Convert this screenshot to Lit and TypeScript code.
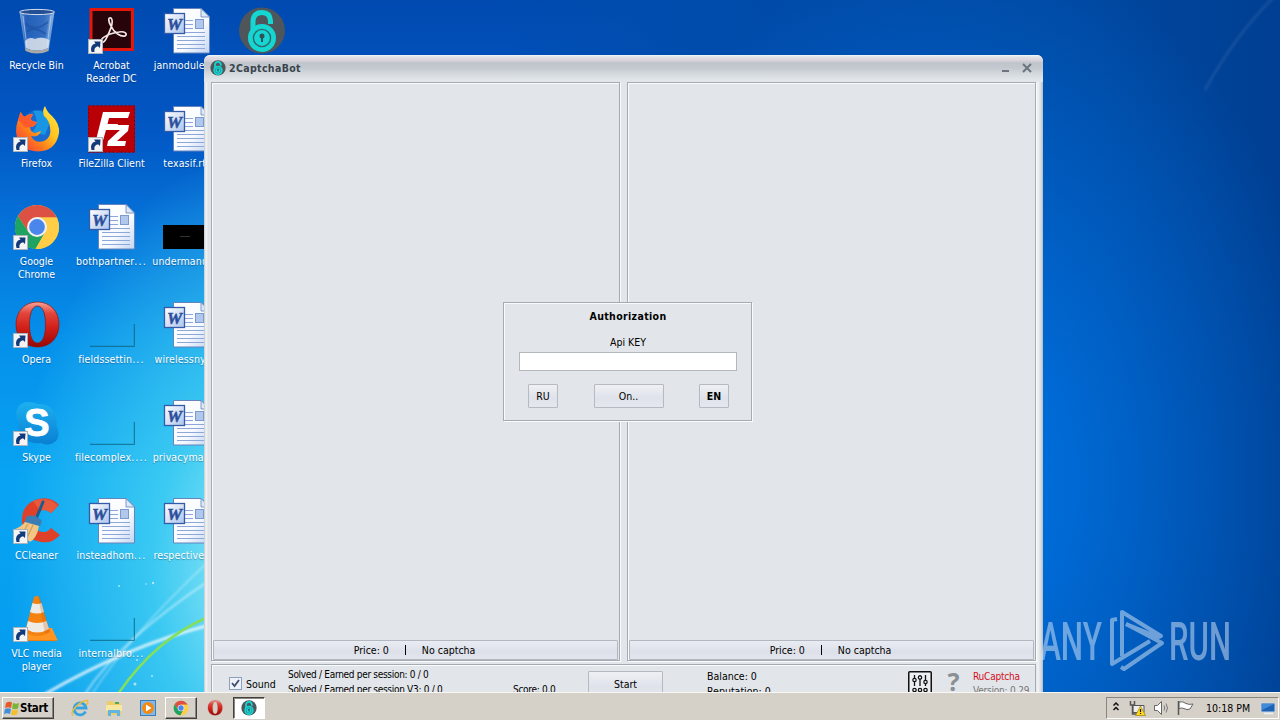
import { LitElement, html, svg, css, TemplateResult, SVGTemplateResult } from "lit";
import { customElement, property } from "lit/decorators.js";
import { classMap } from "lit/directives/class-map.js";

interface DesktopItem {
  icon: string;
  label: string;
  shortcut?: boolean;
}

const EMPTY: DesktopItem = { icon: "none", label: "" };

const COLUMNS: DesktopItem[][] = [
  [
    { icon: "bin", label: "Recycle Bin" },
    { icon: "firefox", label: "Firefox", shortcut: true },
    { icon: "chrome", label: "Google Chrome", shortcut: true },
    { icon: "opera", label: "Opera", shortcut: true },
    { icon: "skype", label: "Skype", shortcut: true },
    { icon: "ccleaner", label: "CCleaner", shortcut: true },
    { icon: "vlc", label: "VLC media player", shortcut: true },
  ],
  [
    { icon: "acrobat", label: "Acrobat Reader DC", shortcut: true },
    { icon: "filezilla", label: "FileZilla Client", shortcut: true },
    { icon: "word", label: "bothpartner..." },
    { icon: "blank", label: "fieldssettin..." },
    { icon: "blank", label: "filecomplex...." },
    { icon: "word", label: "insteadhom..." },
    { icon: "blank", label: "internalbro..." },
  ],
  [
    { icon: "word", label: "janmodule.rtf" },
    { icon: "word", label: "texasif.rtf" },
    { icon: "thumb", label: "undermanu..." },
    { icon: "word", label: "wirelessny..." },
    { icon: "word", label: "privacymar..." },
    { icon: "word", label: "respectivel..." },
    EMPTY,
  ],
  [{ icon: "lock", label: "" }, EMPTY, EMPTY, EMPTY, EMPTY, EMPTY, EMPTY],
];

const ICONS: Record<string, SVGTemplateResult> = {
  none: svg``,

  bin: svg`
    <defs>
      <linearGradient id="glass" x1="0" x2="1">
        <stop offset="0" stop-color="#8fb4e2" /><stop offset=".2" stop-color="#2f68bf" />
        <stop offset=".7" stop-color="#4a82d0" /><stop offset="1" stop-color="#a5c6ea" />
      </linearGradient>
    </defs>
    <path d="M7.500 5 L13 42 Q25 49 37 42 L42.500 5 Z" fill="url(#glass)" fill-opacity=".85" />
    <path d="M12 7 L16 30 H34 L38 7 Z" fill="#1d55b0" opacity=".35" />
    <path d="M13 34 Q17 29 23 32 Q30 29 37.500 33 L36.500 41 Q25 46 13.500 41 Z" fill="#dfe4ea" fill-opacity=".85" />
    <path d="M13 41 Q25 46 37 41 L36.500 44 Q25 49 13.500 44 Z" fill="#a9aaa6" />
    <ellipse cx="25" cy="5" rx="17.500" ry="2.600" fill="#244f94" stroke="#d2deea" stroke-width="1" />
    <path d="M13 16 Q22 26 36 15 M15 25 Q20 18 34 27" fill="none" stroke="#1c4fa0" stroke-width="2" opacity=".6" />
    <path d="M11 9 L15 40 M39 9 L35 40" stroke="#d6e6f6" stroke-width="1" opacity=".55" />`,

  firefox: svg`
    <defs>
      <linearGradient id="fox" x1="1" y1="0" x2="0" y2="1">
        <stop offset="0" stop-color="#fff04a" /><stop offset=".4" stop-color="#ffc21f" />
        <stop offset=".65" stop-color="#ff7a1c" /><stop offset="1" stop-color="#f0284a" />
      </linearGradient>
    </defs>
    <circle cx="26" cy="21" r="16" fill="#176bd2" />
    <path d="M21 6 Q33 3 38 17 L33 30 L20 27 Q29 19 21 6 Z" fill="#19b3ef" opacity=".6" />
    <path d="M33 1 Q35 7 40 11 Q48 19 47 28 Q44 46 26 46.500 Q6 46 4 27 Q4 20 6 15 L8.500 7 L12 12 Q16 9 21 9 L18.500 14 Q20 17 25 17 Q23 22 18 22 Q18 27 23 28 L29 26 Q27 33 19 31 Q23 39 32 36 Q40 32 38 22 Q37 15 32 11 Q30 5 33 1 Z" fill="url(#fox)" />
    <path d="M6 15 L8.500 7 L12 12 Q16 9 21 9 L18.500 14 Q20 17 25 17 Q23 22 18 22 Q12 24 10 19 Z" fill="#ff5a2c" />`,

  chrome: svg`
    <circle cx="25" cy="24" r="22" fill="#fcc934" />
    <path d="M25 14.500 H44.800 A22 22 0 0 0 5.900 13 L16.500 29 Z" fill="#dd5144" />
    <path d="M5.900 13 A22 22 0 0 0 23.500 46 L33 29.500 L25 33.500 L16.500 29 Z" fill="#1ea362" />
    <path d="M25 14.500 H44.800 A22 22 0 0 1 23.500 46 L33.300 29 Z" fill="#ffcd46" />
    <circle cx="25" cy="24" r="10" fill="#f3f1ee" />
    <circle cx="25" cy="24" r="7.900" fill="#4b86ec" />`,

  opera: svg`
    <defs>
      <linearGradient id="op" x1="0" y1="0" x2="0" y2="1">
        <stop offset="0" stop-color="#f6a49a" /><stop offset=".25" stop-color="#e2453a" />
        <stop offset=".6" stop-color="#cf1c16" /><stop offset="1" stop-color="#970806" />
      </linearGradient>
    </defs>
    <path fill-rule="evenodd" d="M25.500 1 C38 1 47 10 47 23.500 C47 37 38 46 25.500 46 C13 46 4 37 4 23.500 C4 10 13 1 25.500 1 Z M25.500 5 C20 5 17.500 13 17.500 23.500 C17.500 34 20 42 25.500 42 C31 42 33.500 34 33.500 23.500 C33.500 13 31 5 25.500 5 Z" fill="url(#op)" stroke="#8e1410" stroke-width=".7" />`,

  skype: svg`
    <defs>
      <linearGradient id="sky" x1="0" y1="0" x2="0" y2="1">
        <stop offset="0" stop-color="#1cb0f0" /><stop offset="1" stop-color="#0a7fd2" />
      </linearGradient>
    </defs>
    <path d="M16 3 Q22 3 25 5 Q40 4 44 18 Q45 23 44.500 27 Q49 36 44 42 Q37 48 29 44 Q12 46 7 30 Q6 26 6.500 22 Q2 15 6 8 Q10 3 16 3 Z" fill="url(#sky)" />
    <text x="25" y="37" text-anchor="middle" class="skype">S</text>`,

  ccleaner: svg`
    <path d="M47 8 L39 16 Q34 11 28 14 Q21 18 22 26 Q24 36 33 35 Q37 34 39 31 L48 38 Q40 47 29 45 Q12 42 10 25 Q9 9 23 3 Q38 -2 47 8 Z" fill="#df4027" />
    <path d="M46 9 L39 16 Q34 11 28 14 L21 4 Q37 -2 46 9 Z" fill="#e9593c" />
    <path d="M31 5 L24 22" stroke="#1e5a8b" stroke-width="3" stroke-linecap="round" />
    <path d="M15 19 Q23 17 30 24 L28 29 L12 26 Z" fill="#3c7eb4" />
    <path d="M13 25 L27 29 Q25 41 18 45 L3 32 Q9 30 13 25 Z" fill="#f2c684" />
    <path d="M16 27 L10 37 M21 28 L15 41" stroke="#d39b56" stroke-width="1.200" />`,

  vlc: svg`
    <path d="M9 36 L40 36 L45.500 46 L4 46 Z" fill="#ef7d10" />
    <path d="M11 33 L40 33 L45.500 45 L8 45 Z" fill="#ff9422" />
    <path d="M22 2 Q25 0 27 2 L38 37 Q25 45 13 37 Z" fill="#f5820f" />
    <path d="M20.500 8 Q25 10 29.500 8 L32 17 Q25 20 18 17 Z M16 26 Q25 30 34.500 26 L37 34 Q25 41 14 34 Z" fill="#eeebe7" />
    <path d="M26 1 L28 2 L38 37 L33 39 Z" fill="#c95700" opacity=".25" />`,

  acrobat: svg`
    <path d="M2.500 1 H47 V44 H2.500 Z" fill="#e3170b" />
    <path d="M5.500 4 H44 V41 H5.500 Z" fill="#260409" />
    <path d="M24 11 C21 10 21 14 24 19 C27 26 34 30 38 29 C41 27 38 24 32 25 C25 26 17 29 14 33 C12 37 17 37 20 30 C23 24 27 14 24 11 Z" fill="none" stroke="#f2e7e4" stroke-width="1.700" />`,

  filezilla: svg`
    <rect x="1" y=".500" width="47" height="47" fill="#b90006" />
    <rect x="1.500" y="1" width="46" height="46" fill="none" stroke="#880006" stroke-dasharray="2 2" />
    <path d="M16 7 H43 L41 13 H22 L20.500 19 H31 L29.500 25 H19 L15 39 H8 Z" fill="#fff" />
    <path d="M26 20 H42 L41 26 L30 36 H39 L38 41 H20 L21 36 L33 25 H25 Z" fill="#fff" />`,

  word: svg`
    <defs>
      <linearGradient id="sheet" x1="0" y1="0" x2="1" y2="1">
        <stop offset="0" stop-color="#fff" /><stop offset=".6" stop-color="#f7faff" /><stop offset="1" stop-color="#c3d5f1" />
      </linearGradient>
      <linearGradient id="badge" x1="0" y1="0" x2="1" y2="1">
        <stop offset="0" stop-color="#fff" /><stop offset="1" stop-color="#adc4ec" />
      </linearGradient>
    </defs>
    <path d="M11.500 1.500 H39 L47.500 10 V46 H11.500 Z" fill="url(#sheet)" stroke="#6583bd" />
    <path d="M39 1.500 V10 H47.500 Z" fill="#dce7f8" stroke="#6583bd" stroke-width=".8" />
    <path d="M23 13.500 H31 M23 17.500 H31 M23 21.500 H31 M23 25.500 H43 M15 29.500 H43 M15 33.500 H43 M15 37.500 H43 M15 41.500 H43" stroke="#8da8d8" />
    <rect x="33.500" y="12.500" width="8" height="9" fill="#b1c7eb" stroke="#7c9ad0" />
    <rect x="2.500" y="6.500" width="20" height="20" fill="url(#badge)" stroke="#345ba8" stroke-width="1.300" />
    <text x="12.500" y="22.500" text-anchor="middle" class="word">W</text>`,

  blank: svg`
    <path d="M3 45.500 H47.500 V23" fill="none" stroke="#08637f" stroke-opacity=".7" />
    <path d="M3 44.500 H46.500 V23" fill="none" stroke="#08637f" stroke-opacity=".18" />`,

  thumb: svg`
    <rect x="1" y="22" width="48" height="24" fill="#000" />
    <path d="M18 33.500 H28" stroke="#333" />`,

  lock: svg`
    <circle cx="25" cy="23.500" r="23" fill="#4e565c" />
    <path d="M16 26 V14 Q16.500 5.500 25 5.500 Q33 5.500 33.500 14 V17" fill="none" stroke="#14d7d2" stroke-width="5" />
    <circle cx="25" cy="31" r="14" fill="#14d7d2" />
    <circle cx="25" cy="31" r="8.600" fill="none" stroke="#34646c" stroke-width="1.400" />
    <circle cx="25" cy="29" r="2.500" fill="#34505a" />
    <path d="M24 29 H26 V35 H24 Z" fill="#34505a" />`,
};

const SHORTCUT = svg`
  <rect x="1.500" y="32.500" width="14" height="14" fill="#f4f4f4" stroke="#aab2bc" />
  <path d="M4.500 45 Q2.500 38 8.500 36.500 L7 34.500 L13.500 34.500 L13 41 L11 39.300 Q6.500 40.500 7.500 45 Z" fill="#123a7a" />`;

@customElement("desktop-icon")
export class DesktopIcon extends LitElement {
  static styles = css`
    :host {
      display: block;
      width: 75px;
      height: 98px;
    }

    svg {
      display: block;
      width: 49px;
      height: 48px;
      margin: 7px 0 0 13px;
      overflow: visible;
    }

    .label {
      margin: 4px -6px 0;
      padding: 0 14px;
      text-align: center;
      line-height: 13px;
      color: #fff;
      text-shadow: 0 1px 1px rgba(0, 20, 60, 0.35);
    }

    .single {
      padding: 0;
      white-space: nowrap;
    }

    .file {
      letter-spacing: 0.15px;
    }

    .dots {
      letter-spacing: 1.2px;
    }

    .word {
      font: italic bold 17px "Liberation Serif", serif;
      fill: #2c4f9c;
      stroke: #2c4f9c;
      stroke-width: 0.5;
    }

    .skype {
      font: bold 38px "Liberation Sans", sans-serif;
      fill: #fff;
      stroke: #fff;
      stroke-width: 0.8;
    }
  `;

  @property({ attribute: false })
  item: DesktopItem = EMPTY;

  render() {
    const { icon, label, shortcut } = this.item;
    const wraps = /^(Google|VLC|Acrobat)/.test(label);
    const name = label.replace(/\.{3,}$/, "");
    const dots = label.slice(name.length);
    const classes = { label: true, single: !wraps, file: !shortcut && icon !== "bin" };
    return html`
      <svg viewBox="0 0 49 48">${ICONS[icon]}${shortcut ? SHORTCUT : ""}</svg>
      <div class=${classMap(classes)}>${name}${dots ? html`<span class="dots">${dots}</span>` : ""}</div>
    `;
  }
}

@customElement("captcha-window")
export class CaptchaWindow extends LitElement {
  static styles = css`
    :host {
      display: flex;
      flex-direction: column;
      box-sizing: border-box;
      padding: 0 7px;
      border-radius: 6px 6px 0 0;
      background: linear-gradient(to right, #c0c6cc 0, #f4f6f8 2px, #dfe3e7 4px, #e2e6ea 7px, #e2e6ea calc(100% - 7px), #f1f3f5 calc(100% - 5px), #d5dade calc(100% - 2px), #b2bac4 100%);
      color: #000;
      overflow: hidden;
    }

    .title {
      display: flex;
      align-items: center;
      flex: none;
      height: 27px;
      margin: 0 -7px;
      padding: 0 10px 1px 6px;
      box-sizing: border-box;
      background: linear-gradient(#f5f7f9 0, #dfe1e5 2px, #dcd5dc 5px, #bfc5cb 8px, #c3c9cf 13px, #d5dade 19px, #e2e6ea 25px);
      color: #39434d;
      font-weight: bold;
    }

    .title svg {
      width: 16px;
      height: 16px;
      margin-right: 3px;
    }

    .name {
      flex: 1;
      letter-spacing: 0.35px;
    }

    .title .controls {
      width: 32px;
      height: 12px;
      margin: 0;
    }

    .panels {
      display: flex;
      gap: 7px;
      flex: none;
      height: 579px;
    }

    .panel {
      flex: 1;
      display: flex;
      flex-direction: column;
      justify-content: flex-end;
      border: 1px solid #a5abb2;
      box-shadow: inset 1px 1px #fafbfc, 1px 1px #fafbfc;
      padding: 1px 1px 0;
    }

    .status {
      display: flex;
      justify-content: center;
      align-items: center;
      height: 18px;
      padding-right: 2px;
      border: 1px solid #b3b8c0;
      border-radius: 1px;
      background: linear-gradient(#e9ecf2, #dde0e9 60%, #e3e6ee);
    }

    .status i {
      width: 1px;
      height: 10px;
      margin: 0 16px;
      background: #000;
    }

    .footer {
      display: flex;
      flex: none;
      margin-top: 3px;
      height: 60px;
      border: 1px solid #a5abb2;
      box-shadow: inset 1px 1px #fafbfc;
    }

    .footer > * {
      flex: none;
    }

    .sound {
      display: flex;
      align-items: center;
      height: 13px;
      gap: 4px;
      padding: 12px 0 0 17px;
      width: 59px;
    }

    .sound svg {
      width: 13px;
      height: 13px;
    }

    .stats {
      width: 225px;
    }

    .score {
      width: 75px;
      box-sizing: border-box;
    }

    .stats,
    .score {
      padding-top: 2px;
      line-height: 15px;
      font-size: 10px;
      letter-spacing: -0.3px;
    }

    .score {
      padding-top: 17px;
    }

    .button {
      display: flex;
      align-items: center;
      justify-content: center;
      box-sizing: border-box;
      height: 24px;
      border: 1px solid #b4b9c2;
      border-radius: 1px;
      background: linear-gradient(#eef0f4, #dfe2ea 60%, #e4e7ed);
    }

    .start {
      width: 75px;
      height: 26px;
      margin: 6px 44px 0 0;
    }

    .account {
      width: 201px;
      padding-top: 4px;
      line-height: 15px;
    }

    .settings {
      width: 24px;
      height: 27px;
      margin-top: 6px;
    }

    .help {
      width: 39px;
      text-align: center;
      padding: 4px 0 0 2px;
      font: bold 25px/24px "Noto Sans", sans-serif;
      color: #8b8e92;
    }

    .version {
      padding-top: 5px;
      line-height: 14px;
      font-size: 10px;
      letter-spacing: -0.2px;
      color: #777;
    }

    .brand {
      color: #d2101c;
    }

    .dialog {
      position: absolute;
      left: 299px;
      top: 247px;
      width: 249px;
      height: 119px;
      box-sizing: border-box;
      border: 1px solid #a5abb2;
      box-shadow: inset 1px 1px #fafbfc, 1px 1px #fafbfc;
      background: #e2e6ea;
      padding: 6px 14px 0 15px;
      text-align: center;
      line-height: 14px;
    }

    .dialog h1 {
      margin: 0 0 12px;
      font: inherit;
      font-weight: bold;
      letter-spacing: 0.35px;
    }

    .field {
      height: 17px;
      margin-top: 3px;
      border: 1px solid #b3b8bd;
      background: #fff;
    }

    .buttons {
      display: flex;
      justify-content: space-between;
      margin: 13px 8px 0 9px;
    }

    .lang {
      width: 30px;
    }

    .go {
      width: 70px;
    }

    .current {
      font-weight: bold;
    }
  `;

  private renderPanel() {
    return html`
      <div class="panel">
        <div class="status"><span>Price: 0</span><i></i><span>No captcha</span></div>
      </div>
    `;
  }

  render() {
    return html`
      <div class="title">
        <svg viewBox="1 0 48 48">${ICONS.lock}</svg>
        <span class="name">2CaptchaBot</span>
        <svg class="controls" viewBox="0 0 32 12">
          <path d="M1 9 H8" stroke="#6c757f" stroke-width="2" />
          <path d="M22 2 L30 10 M30 2 L22 10" stroke="#6c757f" stroke-width="2" />
        </svg>
      </div>
      <div class="panels">${this.renderPanel()}${this.renderPanel()}</div>
      <div class="footer">
        <div class="sound">
          <svg viewBox="0 0 13 13">
            <rect x=".5" y=".5" width="12" height="12" fill="#eef1f8" stroke="#8ba0bd" />
            <path d="M3 6 L5.500 9 L10 3" fill="none" stroke="#3d4c6c" stroke-width="1.800" />
          </svg>
          <span>Sound</span>
        </div>
        <div class="stats">
          <div>Solved / Earned per session: 0 / 0</div>
          <div>Solved / Earned per session V3: 0 / 0</div>
        </div>
        <div class="score">Score: 0.0</div>
        <div class="button start">Start</div>
        <div class="account">
          <div>Balance: 0</div>
          <div>Reputation: 0</div>
        </div>
        <svg class="settings" viewBox="0 0 24 27">
          <rect x=".75" y=".75" width="22.500" height="28" rx="1" fill="#eceef1" stroke="#111" stroke-width="1.500" />
          <path d="M6.500 4 V15 M12 4 V15 M17.500 4 V15" stroke="#111" stroke-width="1.300" />
          <g fill="#eceef1" stroke="#111" stroke-width="1.200">
            <circle cx="6.500" cy="9" r="1.700" /><circle cx="12" cy="6.500" r="1.700" /><circle cx="17.500" cy="11" r="1.700" />
            <circle cx="6.500" cy="19" r="1.700" /><circle cx="12" cy="19" r="1.700" /><circle cx="17.500" cy="19" r="1.700" />
          </g>
        </svg>
        <div class="help">?</div>
        <div class="version">
          <div class="brand">RuCaptcha</div>
          <div>Version: 0.29</div>
        </div>
      </div>
      <div class="dialog">
        <h1>Authorization</h1>
        <div>Api KEY</div>
        <div class="field"></div>
        <div class="buttons">
          <div class="button lang">RU</div>
          <div class="button go">On..</div>
          <div class="button lang current">EN</div>
        </div>
      </div>
    `;
  }
}

@customElement("task-bar")
export class TaskBar extends LitElement {
  static styles = css`
    :host {
      display: flex;
      align-items: center;
      box-sizing: border-box;
      height: 28px;
      padding: 2px 1px 0 2px;
      border-top: 1px solid #f8f7f4;
      background: #d5d0c8;
      color: #000;
    }

    svg {
      display: block;
      width: 18px;
      height: 18px;
      overflow: visible;
    }

    .start,
    .task {
      display: flex;
      align-items: center;
      box-sizing: border-box;
      height: 22px;
      border: 1px solid;
      border-color: #fff #404040 #404040 #fff;
      box-shadow: inset -1px -1px #8a867e;
    }

    .start {
      width: 52px;
      padding-left: 1px;
      font-weight: bold;
    }

    .start svg {
      width: 16px;
      height: 16px;
    }

    .start span {
      font-size: 11.5px;
      letter-spacing: -0.3px;
    }

    .quick {
      display: flex;
      width: 111px;
      padding-left: 17px;
      gap: 16px;
      box-sizing: border-box;
    }

    .task {
      justify-content: center;
      width: 32px;
    }

    .bare {
      border-color: transparent;
      box-shadow: none;
      margin: 0 3px 0 2px;
      width: 31px;
    }

    .active {
      border-color: #404040 #fff #fff #404040;
      box-shadow: inset 1px 1px #8a867e;
      background: #fff;
    }

    .tray {
      display: flex;
      align-items: center;
      box-sizing: border-box;
      width: 173px;
      height: 22px;
      margin-left: auto;
      padding-left: 6px;
      border: 1px solid;
      border-color: #8a867e #fff #fff #8a867e;
    }

    .tray .icons {
      width: 87px;
      height: 18px;
      margin-right: 6px;
    }

    .clock {
      flex: 1;
      white-space: nowrap;
    }

    .tray .screen {
      width: 18px;
      margin-right: 1px;
    }
  `;

  private renderQuickLaunch(): TemplateResult {
    return html`
      <svg viewBox="0 0 18 18">
        <path d="M14.500 12.500 A6 6 0 1 1 15 9 H5" fill="none" stroke="#38a4df" stroke-width="2.800" />
        <path d="M2 16.500 Q-1 14 5 7.500 Q12 1 16 1.500 Q18 2.500 15.500 6" fill="none" stroke="#eebb35" stroke-width="1.500" />
      </svg>
      <svg viewBox="0 0 18 18">
        <path d="M2 2 H8 L9 4 H16 V16 H2 Z" fill="#edcd68" />
        <path d="M1 6 H17 V12 H1 Z" fill="#f8e7a0" />
        <path d="M3 11 H15 V17 H12 V14 H6 V17 H3 Z" fill="#62b5e3" />
        <path d="M10 3 H14 V5 H10 Z" fill="#56a75a" />
      </svg>
      <svg viewBox="0 0 18 18">
        <rect x="1.500" y="1.500" width="15" height="15" fill="#81b9e8" stroke="#397db9" />
        <circle cx="9" cy="9" r="6" fill="#f18916" />
        <path d="M7 5.500 L12.500 9 L7 12.500 Z" fill="#fff" />
      </svg>
    `;
  }

  render() {
    return html`
      <div class="start">
        <svg viewBox="0 0 16 16">
          <path d="M2 3 Q5 1 8 2.500 L7 8 Q4 6.500 1 8 Z" fill="#e55b28" />
          <path d="M9 3 Q12 4.500 15 3 L14 8.500 Q11 10 8 8.500 Z" fill="#7cb535" />
          <path d="M1 9 Q4 7.500 7 9 L6 14 Q3 12.500 0 14 Z" fill="#3f8fdc" />
          <path d="M8 9.500 Q11 11 14 9.500 L13 14.500 Q10 16 7 14.500 Z" fill="#f5bf2c" />
        </svg>
        <span>Start</span>
      </div>
      <div class="quick">${this.renderQuickLaunch()}</div>
      <div class="task"><svg viewBox="-2 -2 54 52">${ICONS.chrome}</svg></div>
      <div class="task bare"><svg viewBox="-2 -2 54 52">${ICONS.opera}</svg></div>
      <div class="task active"><svg viewBox="-2 -2 54 52">${ICONS.lock}</svg></div>
      <div class="tray">
        <svg class="icons" viewBox="0 0 87 18">
          <path d="M.500 6.500 L3 4 L5.500 6.500 M.500 11 L3 8.500 L5.500 11" fill="none" stroke="#111" stroke-width="1.500" />
          <path d="M20 6.500 H31 V13.500 H20 Z" fill="#eee" stroke="#555" />
          <path d="M17.500 2 V6 H21.500 V2 M19.500 6 V15 H24" fill="none" stroke="#555" stroke-width="1.500" />
          <path d="M27.500 7 L32.500 16.500 H22.500 Z" fill="#ffdb1f" stroke="#9c8010" stroke-width=".7" />
          <path d="M27.500 10 V13 M27.500 14 V15" stroke="#111" stroke-width="1.200" />
          <path d="M41.500 6.500 H44.500 L48.500 2.500 V15.500 L44.500 11.500 H41.500 Z" fill="#fff" stroke="#666" />
          <path d="M51 6.500 Q52.500 9 51 11.500 M53 4.500 Q56 9 53 13.500" fill="none" stroke="#777" />
          <path d="M66 3 Q70 2 73 4.500 Q76 6 80 5 L77 10 Q74 11.500 71 9.500 Q69 8.500 66 9.500 Z" fill="#fff" stroke="#666" />
          <path d="M65.500 2 V16" stroke="#555" stroke-width="1.500" />
        </svg>
        <span class="clock">10:18 PM</span>
        <svg class="screen" viewBox="0 0 18 18">
          <rect x="2" y="4" width="14" height="9" fill="#1c62b5" stroke="#cbd7e2" />
          <path d="M3 5 H15 L3 11 Z" fill="#3f8bd8" />
          <path d="M5 14.500 H14" stroke="#eef1f4" stroke-width="1.500" />
        </svg>
      </div>
    `;
  }
}

@customElement("app-root")
export class AppRoot extends LitElement {
  static styles = css`
    :host {
      display: flex;
      flex-direction: column;
      width: 1280px;
      height: 720px;
      overflow: hidden;
      font: 10.5px "DejaVu Sans Condensed", "DejaVu Sans", sans-serif;
      font-stretch: condensed;
    }

    .desktop {
      position: relative;
      flex: 1;
      overflow: hidden;
      background:
        radial-gradient(ellipse 260px 420px at 270px 570px, rgba(175, 243, 246, 0.95), rgba(80, 218, 243, 0.7) 45%, transparent),
        radial-gradient(ellipse 380px 540px at 960px 480px, rgba(0, 124, 240, 0.9), transparent),
        linear-gradient(to right, transparent 500px, rgba(0, 76, 172, 0.97) 700px, #00479f 1100px, #003f92 1280px),
        linear-gradient(#004ab0 0, #0257c4 130px, #0574da 230px, #0590ea 340px, #08a4f3 480px, #059bee 692px);
    }

    .rays {
      position: absolute;
      inset: 0;
      width: 1280px;
      height: 692px;
    }

    .icons {
      position: relative;
      display: grid;
      grid-auto-flow: column;
      grid-template-rows: repeat(7, 98px);
      grid-auto-columns: 75px;
      width: 300px;
      margin-left: -1px;
    }

    captcha-window {
      position: absolute;
      left: 204px;
      top: 55px;
      width: 839px;
      height: 700px;
    }

    .mark {
      font: 500 53.500px Roboto, sans-serif;
    }
  `;

  render() {
    return html`
      <div class="desktop">
        <svg class="rays" viewBox="0 0 1280 692">
          <defs>
            <filter id="soft"><feGaussianBlur stdDeviation="1.200" /></filter>
          </defs>
          <g fill="none" stroke="#fff" filter="url(#soft)">
            <path d="M45 694 Q130 645 210 625" stroke-width="3" stroke-opacity=".75" />
            <path d="M85 694 Q120 640 210 580" stroke-width="2" stroke-opacity=".5" />
            <path d="M92 694 Q130 635 210 560" stroke-width="1.500" stroke-opacity=".4" />
            <path d="M1205 90 Q1235 35 1275 -4" stroke-width="3" stroke-opacity=".08" />
          </g>
          <path d="M118 694 Q155 640 206 618" fill="none" stroke="#83df5c" stroke-width="2.500" />
          <g fill="#fff" fill-opacity=".6">
            <circle cx="119" cy="586" r="1" /><circle cx="153" cy="583" r="1.200" />
            <circle cx="135" cy="684" r="1.500" /><circle cx="146" cy="584" r=".8" />
            <circle cx="137" cy="660" r="1" /><circle cx="152" cy="676" r="1" />
          </g>
        </svg>
        <div class="icons">
          ${COLUMNS.flat().map((item) => html`<desktop-icon .item=${item}></desktop-icon>`)}
        </div>
        <captcha-window></captcha-window>
        <svg class="rays" viewBox="0 0 1280 692">
          <g opacity=".52" fill="#d3e3f6">
            <text class="mark" x="1040" y="660" textLength="62" lengthAdjust="spacingAndGlyphs">ANY</text>
            <text class="mark" x="1169" y="660" textLength="62" lengthAdjust="spacingAndGlyphs">RUN</text>
            <g fill="none" stroke="#d3e3f6" stroke-width="4" stroke-linejoin="round">
              <path d="M1117 619 L1112 620 V664 L1117 661 L1150 641" />
              <path d="M1122 656 V612 L1161 636 L1158 637 L1126 624" />
              <path d="M1126 624 L1162 643 L1124 669 L1121 667" />
            </g>
          </g>
        </svg>
      </div>
      <task-bar></task-bar>
    `;
  }
}
